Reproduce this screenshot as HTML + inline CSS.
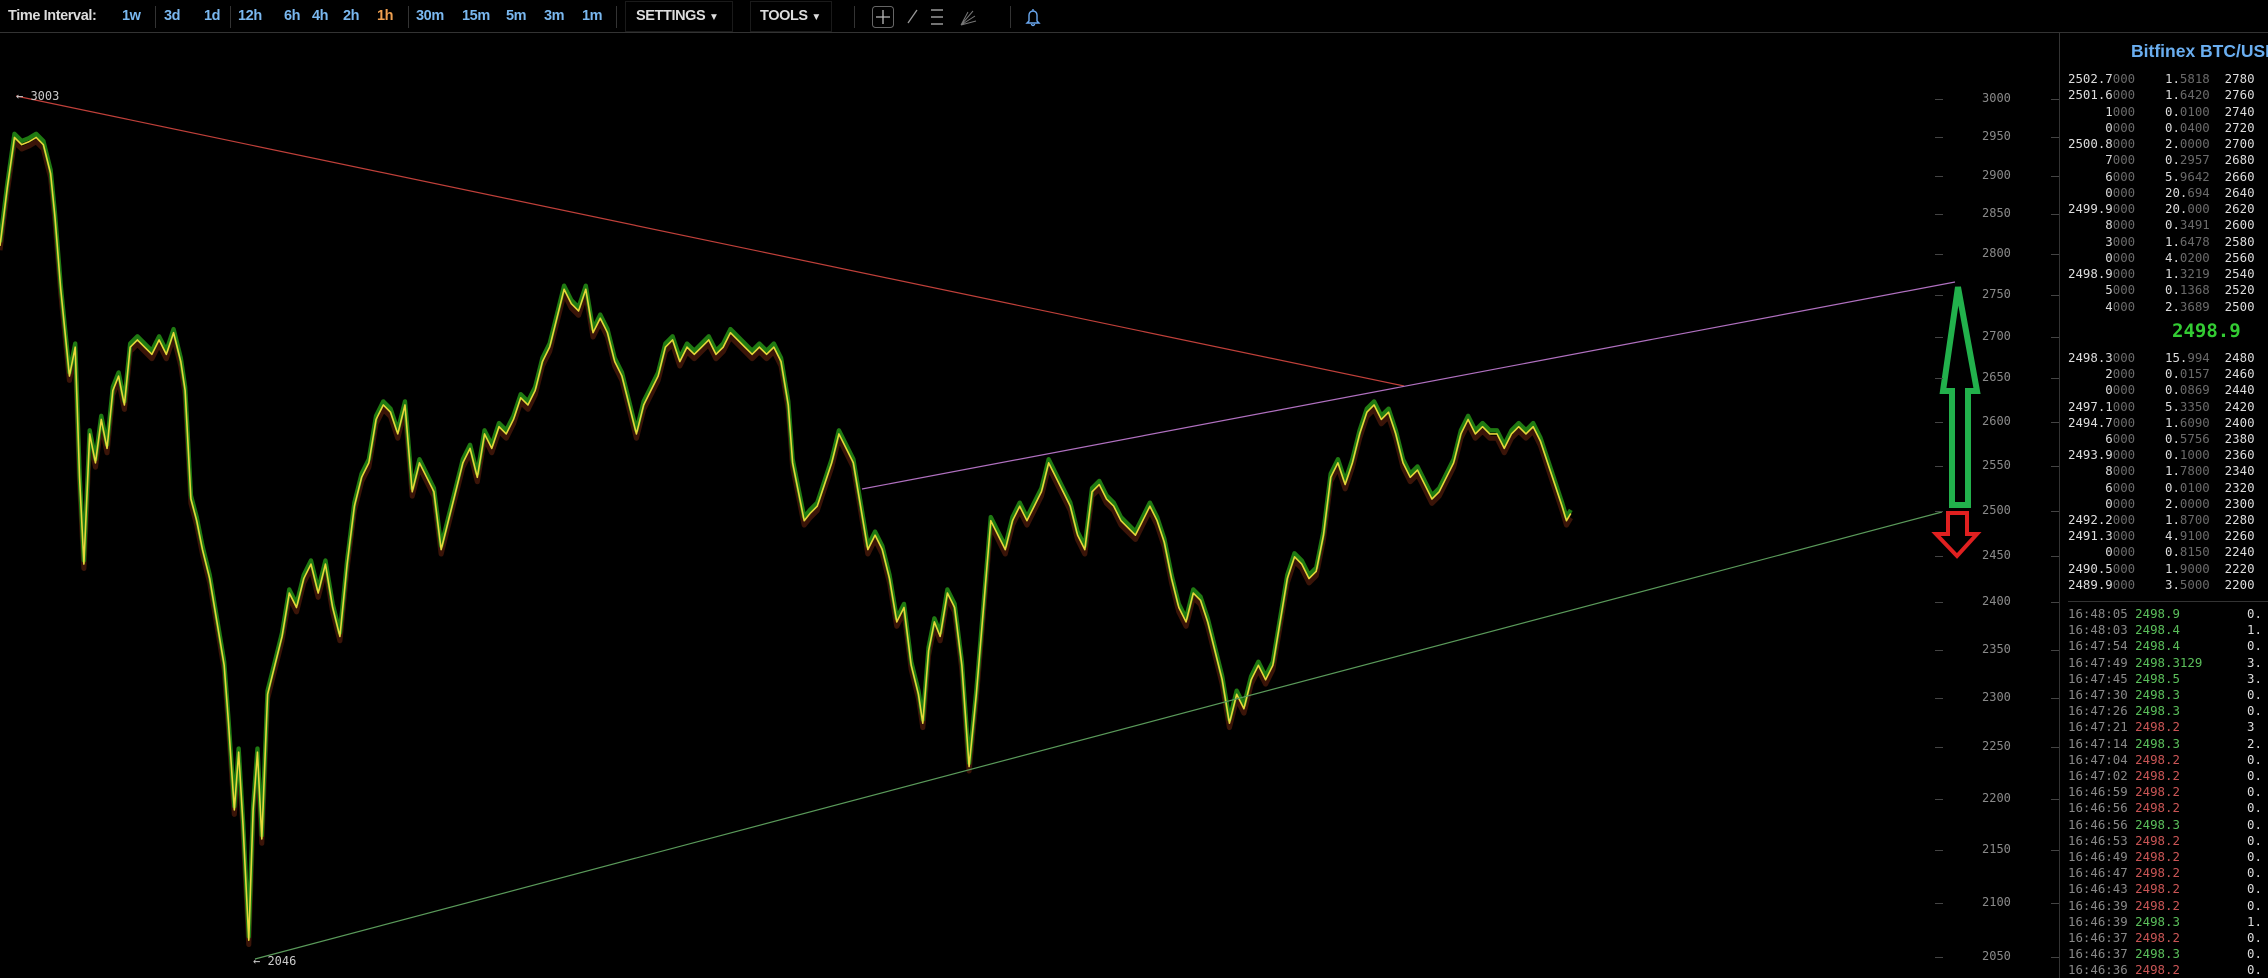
<!DOCTYPE html>
<html><head><meta charset="utf-8">
<style>
*{margin:0;padding:0;box-sizing:border-box}
html,body{width:2268px;height:978px;background:#000;overflow:hidden}
body{position:relative;font-family:"Liberation Sans",sans-serif}
.tb{position:absolute;top:0;left:0;width:2268px;height:33px;background:#000;border-bottom:1px solid #333}
.t{position:absolute;top:8px;font-size:14.5px;font-weight:bold;color:#7ab8f0;letter-spacing:-0.4px;white-space:nowrap}
.w{color:#ddd}
.sep{position:absolute;top:6px;width:1px;height:22px;background:#333}
.box{position:absolute;top:1px;height:31px;border:1px solid #1a1a1a}
.mono{font-family:"DejaVu Sans Mono","Liberation Mono",monospace}
.ob{position:absolute;font-size:12.4px;line-height:16px;white-space:pre;color:#ddd}
.d{color:#6a6a6a}
.ax{position:absolute;left:1982px;font-size:12px;color:#8a8a8a}
.tk{position:absolute;width:8px;height:1px;background:#444}
.g{color:#5bbf5b}.r{color:#c95555}.tm{color:#888}
</style></head><body>
<div class="tb">
<div class="t w" style="left:8px">Time Interval:</div>
<div class="t" style="left:122px">1w</div>
<div class="sep" style="left:155px"></div>
<div class="t" style="left:164px">3d</div>
<div class="t" style="left:204px">1d</div>
<div class="sep" style="left:230px"></div>
<div class="t" style="left:238px">12h</div>
<div class="t" style="left:284px">6h</div>
<div class="t" style="left:312px">4h</div>
<div class="t" style="left:343px">2h</div>
<div class="t" style="left:377px;color:#f0a050">1h</div>
<div class="sep" style="left:408px"></div>
<div class="t" style="left:416px">30m</div>
<div class="t" style="left:462px">15m</div>
<div class="t" style="left:506px">5m</div>
<div class="t" style="left:544px">3m</div>
<div class="t" style="left:582px">1m</div>
<div class="sep" style="left:616px"></div>
<div class="box" style="left:625px;width:108px"></div>
<div class="t w" style="left:636px">SETTINGS <span style="font-size:10px">▼</span></div>
<div class="box" style="left:750px;width:82px"></div>
<div class="t w" style="left:760px">TOOLS <span style="font-size:10px">▼</span></div>
<div class="sep" style="left:854px"></div>
<svg style="position:absolute;left:860px;top:0" width="200" height="33">
<rect x="12.5" y="6.5" width="21" height="21" rx="3" fill="none" stroke="#666"/>
<path d="M23 10v14M16 17h14" stroke="#bbb" stroke-width="1.3"/>
<path d="M48 23l9-13" stroke="#999" stroke-width="1.3"/>
<path d="M71 10h12M71 17h12M71 24h12" stroke="#999" stroke-width="1.5"/>
<path d="M101 25l12-14M101 25l14-9M101 25l15-4M101 25l7-13" stroke="#777" stroke-width="1"/>
</svg>
<div class="sep" style="left:1010px"></div>
<svg style="position:absolute;left:1024px;top:6px" width="18" height="22"><path d="M5 15V9a4 4 0 018 0v6l2 2H3zM7.5 18a1.5 1.5 0 003 0M9 3v2" fill="none" stroke="#6aa8f0" stroke-width="1.4"/></svg>
</div>

<svg style="position:absolute;left:0;top:34px" width="2059" height="944" viewBox="0 34 2059 944">
<defs>
<polyline id="pl" points="0,170 5,130 10,95 15,100 20,98 25,95 30,100 35,120 38,150 42,200 45,230 48,260 52,240 55,330 58,390 62,300 66,320 70,290 74,310 78,270 82,260 86,280 90,240 95,235 100,240 105,245 110,235 115,245 120,230 125,250 128,270 132,345 136,360 140,380 145,400 150,430 155,460 158,500 162,560 165,520 168,570 172,650 175,560 178,520 181,580 185,480 190,460 195,440 200,410 205,420 210,400 215,390 220,410 225,390 230,420 235,440 240,390 245,350 250,330 255,320 260,290 265,280 270,285 275,300 280,280 285,340 290,320 295,330 300,340 305,380 310,360 315,340 320,320 325,310 330,330 335,300 340,310 345,295 350,300 355,290 360,275 365,280 370,270 375,250 380,240 385,220 390,200 395,210 400,215 405,200 410,230 415,220 420,230 425,250 430,260 435,280 440,300 445,280 450,270 455,260 460,240 465,235 470,250 475,240 480,245 485,240 490,235 495,245 500,240 505,230 510,235 515,240 520,245 525,240 530,245 535,240 540,250 545,280 548,320 552,340 556,360 560,355 565,350 570,335 575,320 580,300 585,310 590,320 595,350 600,380 605,370 610,380 615,400 620,430 625,420 630,460 635,480 638,500 642,450 646,430 650,440 655,410 660,420 665,460 670,530 675,480 680,420 685,360 690,370 695,380 700,360 705,350 710,360 715,350 720,340 725,320 730,330 735,340 740,350 745,370 750,380 755,340 760,335 765,345 770,350 775,360 780,365 785,370 790,360 795,350 800,360 805,375 810,400 815,420 820,430 825,410 830,415 835,430 840,450 845,470 850,500 855,480 860,490 865,470 870,460 875,470 880,460 885,430 890,400 895,385 900,390 905,400 910,395 915,370 920,330 925,320 930,335 935,320 940,300 945,285 950,280 955,290 960,285 965,300 970,320 975,330 980,325 985,335 990,345 995,340 1000,330 1005,320 1010,300 1015,290 1020,300 1025,295 1030,300 1035,300 1040,310 1045,300 1050,295 1055,300 1060,295 1065,305 1070,320 1075,335 1080,350 1083,360 1086,355"/>
</defs>
<g transform="scale(1.4464)" fill="none" stroke-linejoin="round">
<use href="#pl" transform="translate(0,3)" stroke="#3a1408" stroke-width="3.5" fill="none"/>
<use href="#pl" transform="translate(0,-2.5)" stroke="#1f7a12" stroke-width="3" fill="none"/>
<use href="#pl" stroke="#e6d83a" stroke-width="1.1" fill="none"/>
</g>
<line x1="16" y1="96" x2="1404" y2="386" stroke="#c0403a" stroke-width="1.2"/>
<line x1="862" y1="489" x2="1955" y2="282" stroke="#b070c0" stroke-width="1.2"/>
<line x1="255" y1="959" x2="1942" y2="512" stroke="#5a9a5a" stroke-width="1.2"/>
<polygon points="1958,287 1943,391 1952,391 1952,505 1968,505 1968,391 1977,391" fill="none" stroke="#22b14c" stroke-width="6" stroke-linejoin="miter"/>
<polygon points="1948,513 1967,513 1967,534 1977,534 1957,556 1936,534 1948,534" fill="none" stroke="#e02020" stroke-width="4"/>
<text x="16" y="100" font-family="DejaVu Sans Mono,monospace" font-size="12" fill="#ccc">← 3003</text>
<text x="253" y="965" font-family="DejaVu Sans Mono,monospace" font-size="12" fill="#ccc">← 2046</text>
</svg>

<div class="mono">
<div class="ax" style="top:91px">3000</div><div class="ax" style="top:129px">2950</div><div class="ax" style="top:168px">2900</div><div class="ax" style="top:206px">2850</div><div class="ax" style="top:246px">2800</div><div class="ax" style="top:287px">2750</div><div class="ax" style="top:329px">2700</div><div class="ax" style="top:370px">2650</div><div class="ax" style="top:414px">2600</div><div class="ax" style="top:458px">2550</div><div class="ax" style="top:503px">2500</div><div class="ax" style="top:548px">2450</div><div class="ax" style="top:594px">2400</div><div class="ax" style="top:642px">2350</div><div class="ax" style="top:690px">2300</div><div class="ax" style="top:739px">2250</div><div class="ax" style="top:791px">2200</div><div class="ax" style="top:842px">2150</div><div class="ax" style="top:895px">2100</div><div class="ax" style="top:949px">2050</div>
</div>
<div>
<div class="tk" style="left:1935px;top:99px"></div><div class="tk" style="left:2051px;top:99px"></div>
<div class="tk" style="left:1935px;top:137px"></div><div class="tk" style="left:2051px;top:137px"></div>
<div class="tk" style="left:1935px;top:176px"></div><div class="tk" style="left:2051px;top:176px"></div>
<div class="tk" style="left:1935px;top:214px"></div><div class="tk" style="left:2051px;top:214px"></div>
<div class="tk" style="left:1935px;top:254px"></div><div class="tk" style="left:2051px;top:254px"></div>
<div class="tk" style="left:1935px;top:295px"></div><div class="tk" style="left:2051px;top:295px"></div>
<div class="tk" style="left:1935px;top:337px"></div><div class="tk" style="left:2051px;top:337px"></div>
<div class="tk" style="left:1935px;top:378px"></div><div class="tk" style="left:2051px;top:378px"></div>
<div class="tk" style="left:1935px;top:422px"></div><div class="tk" style="left:2051px;top:422px"></div>
<div class="tk" style="left:1935px;top:466px"></div><div class="tk" style="left:2051px;top:466px"></div>
<div class="tk" style="left:1935px;top:511px"></div><div class="tk" style="left:2051px;top:511px"></div>
<div class="tk" style="left:1935px;top:556px"></div><div class="tk" style="left:2051px;top:556px"></div>
<div class="tk" style="left:1935px;top:602px"></div><div class="tk" style="left:2051px;top:602px"></div>
<div class="tk" style="left:1935px;top:650px"></div><div class="tk" style="left:2051px;top:650px"></div>
<div class="tk" style="left:1935px;top:698px"></div><div class="tk" style="left:2051px;top:698px"></div>
<div class="tk" style="left:1935px;top:747px"></div><div class="tk" style="left:2051px;top:747px"></div>
<div class="tk" style="left:1935px;top:799px"></div><div class="tk" style="left:2051px;top:799px"></div>
<div class="tk" style="left:1935px;top:850px"></div><div class="tk" style="left:2051px;top:850px"></div>
<div class="tk" style="left:1935px;top:903px"></div><div class="tk" style="left:2051px;top:903px"></div>
<div class="tk" style="left:1935px;top:957px"></div><div class="tk" style="left:2051px;top:957px"></div>
</div>

<div style="position:absolute;left:2059px;top:33px;width:1px;height:945px;background:#333"></div>
<div style="position:absolute;left:2131px;top:41px;font-size:17.5px;font-weight:bold;color:#6aaef0;white-space:nowrap">Bitfinex BTC/USD</div>

<div class="ob mono" style="left:2068px;top:71px;line-height:16.27px">2502.7<span class="d">000</span>    1.<span class="d">5818</span>  2780
2501.6<span class="d">000</span>    1.<span class="d">6420</span>  2760
     1<span class="d">000</span>    0.<span class="d">0100</span>  2740
     0<span class="d">000</span>    0.<span class="d">0400</span>  2720
2500.8<span class="d">000</span>    2.<span class="d">0000</span>  2700
     7<span class="d">000</span>    0.<span class="d">2957</span>  2680
     6<span class="d">000</span>    5.<span class="d">9642</span>  2660
     0<span class="d">000</span>    20.<span class="d">694</span>  2640
2499.9<span class="d">000</span>    20.<span class="d">000</span>  2620
     8<span class="d">000</span>    0.<span class="d">3491</span>  2600
     3<span class="d">000</span>    1.<span class="d">6478</span>  2580
     0<span class="d">000</span>    4.<span class="d">0200</span>  2560
2498.9<span class="d">000</span>    1.<span class="d">3219</span>  2540
     5<span class="d">000</span>    0.<span class="d">1368</span>  2520
     4<span class="d">000</span>    2.<span class="d">3689</span>  2500</div>
<div class="mono" style="position:absolute;left:2172px;top:320px;font-size:19px;font-weight:bold;color:#3c3">2498.9</div>
<div class="ob mono" style="left:2068px;top:350px;line-height:16.2px">2498.3<span class="d">000</span>    15.<span class="d">994</span>  2480
     2<span class="d">000</span>    0.<span class="d">0157</span>  2460
     0<span class="d">000</span>    0.<span class="d">0869</span>  2440
2497.1<span class="d">000</span>    5.<span class="d">3350</span>  2420
2494.7<span class="d">000</span>    1.<span class="d">6090</span>  2400
     6<span class="d">000</span>    0.<span class="d">5756</span>  2380
2493.9<span class="d">000</span>    0.<span class="d">1000</span>  2360
     8<span class="d">000</span>    1.<span class="d">7800</span>  2340
     6<span class="d">000</span>    0.<span class="d">0100</span>  2320
     0<span class="d">000</span>    2.<span class="d">0000</span>  2300
2492.2<span class="d">000</span>    1.<span class="d">8700</span>  2280
2491.3<span class="d">000</span>    4.<span class="d">9100</span>  2260
     0<span class="d">000</span>    0.<span class="d">8150</span>  2240
2490.5<span class="d">000</span>    1.<span class="d">9000</span>  2220
2489.9<span class="d">000</span>    3.<span class="d">5000</span>  2200</div>
<div style="position:absolute;left:2068px;top:601px;width:200px;height:1px;background:#333"></div>
<div class="ob mono" style="left:2068px;top:606px;line-height:16.2px;color:#ddd"><span class="tm">16:48:05</span> <span class="g">2498.9</span>         0.
<span class="tm">16:48:03</span> <span class="g">2498.4</span>         1.
<span class="tm">16:47:54</span> <span class="g">2498.4</span>         0.
<span class="tm">16:47:49</span> <span class="g">2498.3129</span>      3.
<span class="tm">16:47:45</span> <span class="g">2498.5</span>         3.
<span class="tm">16:47:30</span> <span class="g">2498.3</span>         0.
<span class="tm">16:47:26</span> <span class="g">2498.3</span>         0.
<span class="tm">16:47:21</span> <span class="r">2498.2</span>         3
<span class="tm">16:47:14</span> <span class="g">2498.3</span>         2.
<span class="tm">16:47:04</span> <span class="r">2498.2</span>         0.
<span class="tm">16:47:02</span> <span class="r">2498.2</span>         0.
<span class="tm">16:46:59</span> <span class="r">2498.2</span>         0.
<span class="tm">16:46:56</span> <span class="r">2498.2</span>         0.
<span class="tm">16:46:56</span> <span class="g">2498.3</span>         0.
<span class="tm">16:46:53</span> <span class="r">2498.2</span>         0.
<span class="tm">16:46:49</span> <span class="r">2498.2</span>         0.
<span class="tm">16:46:47</span> <span class="r">2498.2</span>         0.
<span class="tm">16:46:43</span> <span class="r">2498.2</span>         0.
<span class="tm">16:46:39</span> <span class="r">2498.2</span>         0.
<span class="tm">16:46:39</span> <span class="g">2498.3</span>         1.
<span class="tm">16:46:37</span> <span class="r">2498.2</span>         0.
<span class="tm">16:46:37</span> <span class="g">2498.3</span>         0.
<span class="tm">16:46:36</span> <span class="r">2498.2</span>         0.</div>
</body></html>
